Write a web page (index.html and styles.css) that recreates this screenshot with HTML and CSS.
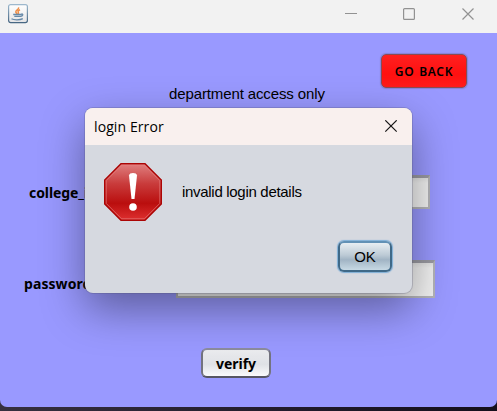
FILE: index.html
```html
<!DOCTYPE html>
<html lang="en">
<head>
<meta charset="utf-8">
<title>Login</title>
<link rel="stylesheet" href="styles.css">
</head>
<body>
<div class="window">
  <header class="titlebar">
    <svg class="java" width="20" height="20" viewBox="0 0 20 20">
      <defs>
        <linearGradient id="jb" x1="0" y1="0" x2="0" y2="1"><stop offset="0" stop-color="#9db8cd"/><stop offset="1" stop-color="#476783"/></linearGradient>
        <linearGradient id="jf" x1="0" y1="0" x2="0" y2="1"><stop offset="0" stop-color="#fff"/><stop offset="1" stop-color="#e4e4e6"/></linearGradient>
      </defs>
      <rect x=".6" y=".6" width="18.8" height="18" rx="2" fill="url(#jf)" stroke="url(#jb)" stroke-width="1.2"/>
      <path d="M10.5 3.3c1 2-3.2 2.800-2.700 4.700.2.900 1.200 1.300 1.300 2M12 5.800c-1.700.8-2.400 1.500-1.700 2.500.4.600.3 1.100-.2 1.500" fill="none" stroke="#ef8e47" stroke-width="1.500"/>
      <path d="M5.200 10.500h8.600M6.300 12.400h6.500M13.500 10c2.200-.5 1.300 2.200-.8 2.300M3.500 14.800c2.500 1.500 8.500 1.400 11.300-.2" fill="none" stroke="#6689a8" stroke-width="1.300"/>
    </svg>
    <svg class="controls" width="130" height="14" viewBox="0 0 130 14" fill="none" stroke="#929292">
      <path d="M0 6.500h12" stroke-width="1"/>
      <rect x="58.600" y="1.600" width="10.800" height="10.800" rx="1" stroke-width="1.200"/>
      <path d="M117.500 1.500l11 11m0-11l-11 11" stroke-width="1.200"/>
    </svg>
  </header>
  <main class="form">
    <button class="back">GO BACK</button>
    <h1 class="heading">department access only</h1>
    <div class="row id-row"><label>college_id</label><span class="field"></span></div>
    <div class="row pass-row"><label>password</label><span class="field"></span></div>
    <button class="verify">verify</button>
  </main>
</div>
<section class="dialog">
  <header class="dialog-title">
    <span>login Error</span>
    <svg width="14" height="14" viewBox="0 0 14 14" fill="none" stroke="#1c1a1a" stroke-width="1.200"><path d="M1.300 .3l11.400 11.400m0-11.400L1.300 11.700"/></svg>
  </header>
  <div class="message">
    <svg width="58" height="58" viewBox="0 0 58 58">
      <defs><linearGradient id="stop" x1="0" y1="0" x2="0" y2="1"><stop offset="0" stop-color="#e08080"/><stop offset=".35" stop-color="#c93c3c"/><stop offset=".7" stop-color="#ba0e0e"/><stop offset="1" stop-color="#df3030"/></linearGradient></defs>
      <path d="M17 .7h24L57.300 17v24L41 57.300H17L.7 41V17z" fill="url(#stop)" stroke="#ab0505" stroke-width="1.400"/>
      <path d="M17.600 2.200h22.800L55.800 17.600v22.800L40.400 55.800H17.600L2.200 40.400V17.600z" fill="none" stroke="#e58080" stroke-opacity=".65"/>
      <path d="M25 12.500c0-3.300 8-3.300 8 0L30.500 36h-3z" fill="#fff"/>
      <circle cx="29" cy="44" r="3.800" fill="#fff"/>
    </svg>
    <p>invalid login details</p>
  </div>
  <button class="ok">OK</button>
</section>
</body>
</html>
```
FILE: styles.css
```css
* { box-sizing: border-box; }

body {
  margin: 0;
  width: 497px;
  height: 411px;
  overflow: hidden;
  background: linear-gradient(90deg, #36303f, #211b2b 60%, #15101c);
  font-family: "Liberation Sans", sans-serif;
  color: #000;
}

button {
  display: block;
  padding: 0;
  color: #000;
  white-space: nowrap;
}

.window {
  height: 407px;
  overflow: hidden;
  background: #9999ff;
  border-radius: 0 0 7px 7px;
}

.titlebar {
  display: flex;
  justify-content: space-between;
  height: 33px;
  padding: 4px 22px 0 8px;
  background: #f2f2f2;
}

.controls { margin-top: 3px; }

.form {
  display: flex;
  flex-direction: column;
  padding-top: 21px;
}

.back {
  align-self: flex-end;
  width: 86px;
  height: 34px;
  margin-right: 30px;
  border: 1px solid #8c4a52;
  border-radius: 5px;
  background: linear-gradient(#ff2020, #ff1010 60%, #ff1c1c);
  box-shadow: 0 0 1px 1px rgba(100, 90, 140, .35);
  font: 600 12px "Noto Sans", sans-serif;
  letter-spacing: .7px;
  word-spacing: 1px;
}

.heading {
  margin: 0 0 0 169px;
  font-size: 15px;
  font-weight: 400;
  line-height: 12px;
  letter-spacing: -.12px;
}

.row {
  display: flex;
  align-items: center;
  font: bold 14px "Noto Sans", sans-serif;
}

.id-row {
  height: 34px;
  margin-top: 75px;
  padding-left: 29px;
}

.pass-row {
  height: 38px;
  margin-top: 51px;
  padding-left: 24px;
}

.row label { width: 152px; }

.id-row label {
  width: 147px;
  letter-spacing: -.08px;
}

.pass-row label {
  padding-top: 9px;
  letter-spacing: .08px;
}

.field {
  height: 100%;
  width: 259px;
  border: 2px solid #b4b4b8;
  border-top: 3px solid #9b9ba3;
  background: linear-gradient(#e4e4e4, #f2f2f2 5px);
}

.id-row .field { width: 254px; }

.verify {
  width: 70px;
  height: 30px;
  margin: 50px 0 0 201px;
  border: 2px solid #73737f;
  border-top-color: #8c8c9d;
  border-bottom-color: #565663;
  border-radius: 6px;
  background: linear-gradient(#ebecef, #dfe1e6 55%, #fafafc);
  font: bold 14px "Noto Sans", sans-serif;
}

.dialog {
  position: absolute;
  left: 85px;
  top: 108px;
  width: 327px;
  height: 185px;
  overflow: hidden;
  border-radius: 8px;
  background: #d6d9e0;
  box-shadow: 0 0 0 1px rgba(80, 80, 110, .25), 0 16px 44px rgba(0, 0, 0, .4);
}

.dialog-title {
  display: flex;
  align-items: center;
  justify-content: space-between;
  height: 37px;
  padding: 0 14px 0 9px;
  background: #f9f0ee;
  font: 14px "Open Sans", sans-serif;
  letter-spacing: .1px;
}

.message {
  display: flex;
  align-items: center;
  gap: 20px;
  padding: 18px 0 0 19px;
}

.message p {
  margin: -2px 0 0;
  font-size: 15px;
  letter-spacing: -.3px;
}

.ok {
  width: 54px;
  height: 31px;
  margin: 20px 0 0 253px;
  border: 2px solid #3f6988;
  border-top-color: #6291b5;
  border-radius: 6px;
  background: linear-gradient(#e8eef2, #bccad5 45%, #a1b4c4 62%, #c7d9e4);
  box-shadow: 0 0 1px 1px #7eafd8;
  font: 15px "Liberation Sans", sans-serif;
}
```
